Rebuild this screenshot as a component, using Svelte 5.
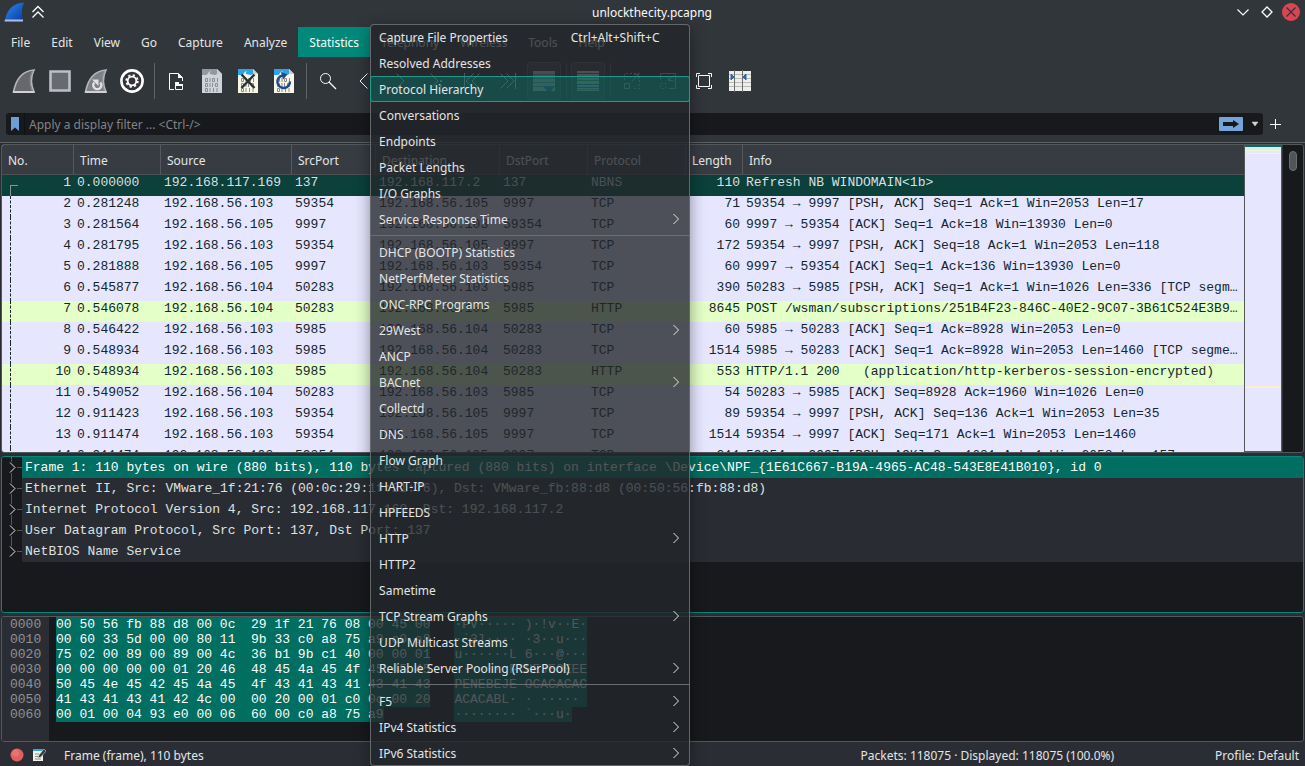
<script>
  const P = '192.168.56.';
  const packets = [
    [1, '0.000000', '192.168.117.169', '137', '192.168.117.2', '137', 'NBNS', 110, 'Refresh NB WINDOMAIN<1b>'],
    [2, '0.281248', P + '103', '59354', P + '105', '9997', 'TCP', 71, '59354 → 9997 [PSH, ACK] Seq=1 Ack=1 Win=2053 Len=17'],
    [3, '0.281564', P + '105', '9997', P + '103', '59354', 'TCP', 60, '9997 → 59354 [ACK] Seq=1 Ack=18 Win=13930 Len=0'],
    [4, '0.281795', P + '103', '59354', P + '105', '9997', 'TCP', 172, '59354 → 9997 [PSH, ACK] Seq=18 Ack=1 Win=2053 Len=118'],
    [5, '0.281888', P + '105', '9997', P + '103', '59354', 'TCP', 60, '9997 → 59354 [ACK] Seq=1 Ack=136 Win=13930 Len=0'],
    [6, '0.545877', P + '104', '50283', P + '103', '5985', 'TCP', 390, '50283 → 5985 [PSH, ACK] Seq=1 Ack=1 Win=1026 Len=336 [TCP segm…'],
    [7, '0.546078', P + '104', '50283', P + '103', '5985', 'HTTP', 8645, 'POST /wsman/subscriptions/251B4F23-846C-40E2-9C07-3B61C524E3B9…'],
    [8, '0.546422', P + '103', '5985', P + '104', '50283', 'TCP', 60, '5985 → 50283 [ACK] Seq=1 Ack=8928 Win=2053 Len=0'],
    [9, '0.548934', P + '103', '5985', P + '104', '50283', 'TCP', 1514, '5985 → 50283 [ACK] Seq=1 Ack=8928 Win=2053 Len=1460 [TCP segme…'],
    [10, '0.548934', P + '103', '5985', P + '104', '50283', 'HTTP', 553, 'HTTP/1.1 200   (application/http-kerberos-session-encrypted)'],
    [11, '0.549052', P + '104', '50283', P + '103', '5985', 'TCP', 54, '50283 → 5985 [ACK] Seq=8928 Ack=1960 Win=1026 Len=0'],
    [12, '0.911423', P + '103', '59354', P + '105', '9997', 'TCP', 89, '59354 → 9997 [PSH, ACK] Seq=136 Ack=1 Win=2053 Len=35'],
    [13, '0.911474', P + '103', '59354', P + '105', '9997', 'TCP', 1514, '59354 → 9997 [ACK] Seq=171 Ack=1 Win=2053 Len=1460'],
    [14, '0.911474', P + '103', '59354', P + '105', '9997', 'TCP', 211, '59354 → 9997 [PSH, ACK] Seq=1631 Ack=1 Win=2053 Len=157']
  ];
  const columns = ['No.', 'Time', 'Source', 'SrcPort', 'Destination', 'DstPort', 'Protocol', 'Length', 'Info'];

  const details = [
    'Frame 1: 110 bytes on wire (880 bits), 110 bytes captured (880 bits) on interface \\Device\\NPF_{1E61C667-B19A-4965-AC48-543E8E41B010}, id 0',
    'Ethernet II, Src: VMware_1f:21:76 (00:0c:29:1f:21:76), Dst: VMware_fb:88:d8 (00:50:56:fb:88:d8)',
    'Internet Protocol Version 4, Src: 192.168.117.169, Dst: 192.168.117.2',
    'User Datagram Protocol, Src Port: 137, Dst Port: 137',
    'NetBIOS Name Service'
  ];

  const hex = [
    ['0000', '00 50 56 fb 88 d8 00 0c  29 1f 21 76 08 00 45 00', '·PV····· )·!v··E·'],
    ['0010', '00 60 33 5d 00 00 80 11  9b 33 c0 a8 75 a9 c0 a8', '·`3]···· ·3··u···'],
    ['0020', '75 02 00 89 00 89 00 4c  36 b1 9b c1 40 00 00 01', 'u······L 6···@···'],
    ['0030', '00 00 00 00 00 01 20 46  48 45 4a 45 4f 45 45 45', '······ F HEJEOEEE'],
    ['0040', '50 45 4e 45 42 45 4a 45  4f 43 41 43 41 43 41 43', 'PENEBEJE OCACACAC'],
    ['0050', '41 43 41 43 41 42 4c 00  00 20 00 01 c0 0c 00 20', 'ACACABL· · ····· '],
    ['0060', '00 01 00 04 93 e0 00 06  60 00 c0 a8 75 a9', '········ `···u·']
  ];

  const menusLeft = ['File', 'Edit', 'View', 'Go', 'Capture', 'Analyze'];
  const menusRight = ['Telephony', 'Wireless', 'Tools', 'Help'];

  // A null entry is a separator; a trailing ">" opens a submenu.
  const statistics = [
    'Capture File Properties', 'Resolved Addresses', 'Protocol Hierarchy', 'Conversations', 'Endpoints',
    'Packet Lengths', 'I/O Graphs', 'Service Response Time>', null,
    'DHCP (BOOTP) Statistics', 'NetPerfMeter Statistics', 'ONC-RPC Programs', '29West>', 'ANCP', 'BACnet>',
    'Collectd', 'DNS', 'Flow Graph', 'HART-IP', 'HPFEEDS', 'HTTP>', 'HTTP2', 'Sametime', 'TCP Stream Graphs>',
    'UDP Multicast Streams', 'Reliable Server Pooling (RSerPool)>', null,
    'F5>', 'IPv4 Statistics>', 'IPv6 Statistics>'
  ];

  const tools = [
    ['fin', 'Start capture'], ['stop', 'Stop capture'], ['restart', 'Restart capture'], ['options', 'Capture options'], null,
    ['open', 'Open'], ['save', 'Save'], ['close', 'Close file'], ['reload', 'Reload'], null,
    ['find', 'Find packet'], ['back', 'Previous'], ['forward', 'Next'], ['goto', 'Go to packet'], ['first', 'First packet'],
    ['last', 'Last packet'], ['autoscroll', 'Auto scroll'], null, ['colorize', 'Colorize'], null,
    ['zoomin', 'Enlarge text'], ['zoomout', 'Shrink text'], ['normal', 'Normal size'], ['resize', 'Resize columns']
  ];
</script>

{#snippet sheet(top, paper, ink)}
  <path d="M6 4h15l5 5v19H6z" fill={paper} />
  <path d="M6 4h15v5c-2 2-5 0-7 0c-1-1 1-3 1-3c-3 0-3 4-5 4H6z" fill={top} />
  <path d="M21 4l5 5h-5z" fill="#c9ccd0" />
  <g fill="none" stroke={ink} stroke-width="1">
    <path d="M9.500 13.500h2v3h-2zM16.500 13.500h2v3h-2zM9.500 18.500h2v3h-2zM19.500 18.500h2v3h-2zM9.500 23.500h2v3h-2z" />
    <path d="M14 13v4M21.500 13v4M14 18v4M16.500 18v4M14 23v4M17.500 23v4M21 23v4" />
  </g>
{/snippet}

{#snippet icon(name)}
  <svg width="32" height="32" viewBox="0 0 32 32" aria-hidden="true">
    {#if name === 'fin' || name === 'restart'}
      <path d="M5.500 27C8 14 14 6 26 5C22.500 12 22.500 19 26 27z" fill={name === 'fin' ? '#66686e' : '#7d8086'} stroke="#b4b6ba" stroke-width="1.600" />
      <path d="M5 27h21.500" stroke="#cfd1d4" stroke-width="2" />
      <path d="M24 7C21.500 12 21.500 19 24 25.500" fill="none" stroke="#909298" stroke-width="1" />
      {#if name === 'restart'}
        <path d="M14.300 17.500a4 4 0 1 0 6 0" fill="none" stroke="#e0e2e4" stroke-width="2.400" />
        <path d="M12 14.500h6.500v6.500z" fill="#e0e2e4" />
      {/if}
    {:else if name === 'stop'}
      <path d="M6.500 6.500h19v19h-19z" fill="#686a72" stroke="#bdbfc5" stroke-width="2.600" />
    {:else if name === 'options'}
      <circle cx="16" cy="16" r="10.600" fill="#333539" stroke="#fff" stroke-width="2.600" />
      <circle cx="16" cy="16" r="5.800" fill="none" stroke="#fff" stroke-width="1.800" stroke-dasharray="2.200 2.355" />
      <circle cx="16" cy="16" r="4.300" fill="none" stroke="#fff" stroke-width="1.800" />
    {:else if name === 'open'}
      <path d="M14 24.500H9.500V8.500h9l4 4V16" fill="none" stroke="#fcfcfc" />
      <path d="M18 8v5h5z" fill="#fcfcfc" />
      <path d="M15.500 24.500v-7h3v2h4v5z" fill="none" stroke="#fcfcfc" />
      <path d="M15 17h4v2h4v2h-8z" fill="#fcfcfc" />
    {:else if name === 'save'}
      {@render sheet('#9496a0', '#cfd2d8', '#8a8d94')}
    {:else if name === 'close'}
      {@render sheet('#2fa4e4', '#f8f6e6', '#8a8b84')}
      <path d="M9.500 9.500l13 13.500M22.500 9.500l-13 13.500" stroke="#2a3034" stroke-width="2.400" />
    {:else if name === 'reload'}
      {@render sheet('#2fa4e4', '#f8f6e6', '#8a8b84')}
      <path d="M14.500 10.500a6.300 6.300 0 1 0 7.500 6" fill="none" stroke="#204a8c" stroke-width="2.400" />
      <path d="M13 7l6.500 2.500-4.500 5z" fill="#204a8c" />
    {:else if name === 'find'}
      <circle cx="13.500" cy="13.500" r="5" fill="none" stroke="#fcfcfc" />
      <path d="M17 17l7 7" stroke="#fcfcfc" stroke-width="1.300" />
    {:else if name === 'back'}
      <path d="M19.500 8.500l-7.500 7.500 7.500 7.500" fill="none" stroke="#fcfcfc" />
    {:else if name === 'forward'}
      <path d="M12.500 8.500l7.500 7.500-7.500 7.500" fill="none" stroke="#fcfcfc" />
    {:else if name === 'goto'}
      <path d="M10.500 8.500l7.500 7.500-7.500 7.500" fill="none" stroke="#fcfcfc" /><path d="M20 15h2v2h-2zM20 20h2v2h-2z" fill="#fcfcfc" />
    {:else if name === 'first'}
      <path d="M8.500 8v16M17.500 8.500L10 16l7.500 7.500M23.500 8.500L16 16l7.500 7.500" fill="none" stroke="#fcfcfc" />
    {:else if name === 'last'}
      <path d="M23.500 8v16M8.500 8.500L16 16l-7.500 7.500M14.500 8.500L22 16l-7.500 7.500" fill="none" stroke="#fcfcfc" />
    {:else if name === 'autoscroll'}
      <path d="M5 6h22v20H5z" fill="#d8dad4" /><path d="M5 9.500h22M5 13.500h22M5 17.500h22M5 21.500h22" stroke="#8d9090" /><path d="M15 21h12l-4 5h-4z" fill="#3465a4" />
    {:else if name === 'colorize'}
      <path d="M5 6h22v20H5z" fill="#e4e6e2" /><path d="M5 8.500h22" stroke="#c33" /><path d="M5 12h22" stroke="#3465a4" /><path d="M5 15.500h22" stroke="#4e9a30" /><path d="M5 19.500h22" stroke="#3465a4" /><path d="M5 22.500h22" stroke="#75507b" /><path d="M5 24.500h22" stroke="#c4a000" />
    {:else if name === 'zoomin'}
      <path d="M8.500 18.500h5v5h-5zM18 9.500h4.500V14M22 10l-6 6" fill="none" stroke="#fcfcfc" /><path d="M8.500 15V8.500h15v15H16" fill="none" stroke="#fcfcfc" stroke-dasharray="2 2" />
    {:else if name === 'zoomout'}
      <path d="M8.500 15V8.500h15v15H17M16.500 11v4.500H21M17 15l5-5" fill="none" stroke="#fcfcfc" /><path d="M8.500 18.500h5v5h-5z" fill="none" stroke="#fcfcfc" stroke-dasharray="2 2" />
    {:else if name === 'normal'}
      <path d="M10.500 10.500h11v11h-11zM8.500 12V8.500H12M20 8.500h3.500V12M23.500 20v3.500H20M12 23.500H8.500V20" fill="none" stroke="#fcfcfc" />
    {:else if name === 'resize'}
      <path d="M5 6h22v20H5z" fill="#eeeeec" /><path d="M5 9.500h22M5 13.500h22M5 17.500h22M5 21.500h22" stroke="#b9bbb6" /><path d="M10.500 5v22M18.500 5v22" stroke="#6b6e6b" /><path d="M7 9v6l3-3zM22 9v6l-3-3z" fill="#3465a4" stroke="#3465a4" />
    {/if}
  </svg>
{/snippet}

<div class="window">
  <header class="title">
    <div class="side">
      <svg width="22" height="22" viewBox="0 0 22 22" aria-hidden="true">
        <defs><linearGradient id="fin" x1="0" y1="0" x2="1" y2="1"><stop offset="0" stop-color="#2f8cf0" /><stop offset="1" stop-color="#0838a0" /></linearGradient></defs>
        <path d="M1 20C2.500 9 9 2 20 1.500C17.500 7 17.500 14 19 20z" fill="url(#fin)" />
        <path d="M1 18.500h18v2H0.500z" fill="#aebfe6" />
      </svg>
      <button class="plain" aria-label="Keep above">
        <svg width="14" height="14" viewBox="0 0 14 14"><path d="M1.500 7L7 1.500 12.500 7M1.500 12.500L7 7l5.500 5.500" fill="none" stroke="#fcfcfc" stroke-width="1.300" /></svg>
      </button>
    </div>
    <h1>unlockthecity.pcapng</h1>
    <div class="side end">
      <button class="plain" aria-label="Minimize"><svg width="12" height="12" viewBox="0 0 12 12"><path d="M.5 3.500L6 9l5.500-5.500" fill="none" stroke="#fcfcfc" stroke-width="1.200" /></svg></button>
      <button class="plain" aria-label="Maximize"><svg width="12" height="12" viewBox="0 0 12 12"><path d="M6 1l5 5-5 5-5-5z" fill="none" stroke="#fcfcfc" stroke-width="1.300" /></svg></button>
      <button class="plain" aria-label="Close"><svg width="18" height="18" viewBox="0 0 18 18"><circle cx="9" cy="9" r="9" fill="#da4453" /><path d="M4.500 4.500l9 9M13.500 4.500l-9 9" stroke="#31363b" stroke-width="1.300" /></svg></button>
    </div>
  </header>

  <nav class="menubar">
    {#each menusLeft as m}<button>{m}</button>{/each}
    <div class="anchor">
      <button class="open">Statistics</button>
      <div class="menu" role="menu">
        {#each statistics as s, i}
          {#if s === null}
            <hr />
          {:else}
            <button role="menuitem" class:hot={i === 2}>
              <span>{s.replace('>', '')}</span>
              {#if i === 0}<span class="key">Ctrl+Alt+Shift+C</span>{/if}
              {#if s.endsWith('>')}
                <svg width="8" height="12" viewBox="0 0 8 12" aria-hidden="true"><path d="M1.500 1l5 5-5 5" fill="none" stroke="#e4e5e6" /></svg>
              {/if}
            </button>
          {/if}
        {/each}
      </div>
    </div>
    {#each menusRight as m}<button>{m}</button>{/each}
  </nav>

  <div class="toolbar">
    {#each tools as t}
      {#if t === null}
        <i></i>
      {:else}
        <button aria-label={t[1]} class:on={t[0] === 'autoscroll' || t[0] === 'colorize'} class:dim={t[0] === 'zoomin' || t[0] === 'zoomout'}>{@render icon(t[0])}</button>
      {/if}
    {/each}
  </div>

  <div class="filter">
    <div class="field">
      <button class="plain mark" aria-label="Bookmarks"><svg width="8" height="14" viewBox="0 0 8 14"><path d="M0 0h8v14l-4-3.500L0 14z" fill="#6f9dd6" /></svg></button>
      <input type="text" aria-label="Display filter" placeholder="Apply a display filter ... &lt;Ctrl-/&gt;" />
      <button class="plain" aria-label="Apply"><svg width="24" height="14" viewBox="0 0 24 14"><rect width="24" height="14" rx="1" fill="#76a3d9" /><path d="M4 5h10V3l6 4-6 4V9H4z" fill="#18191c" /></svg></button>
      <button class="plain" aria-label="Recent filters"><svg width="20" height="14" viewBox="0 0 20 14"><path d="M9 5h6l-3 4z" fill="#d5d6cf" stroke="#d5d6cf" stroke-width=".5" /></svg></button>
    </div>
    <button class="plain" aria-label="Add filter button"><svg width="24" height="12" viewBox="0 0 24 12"><path d="M12.500 1v10M7 6.500h11" stroke="#fcfcfc" /></svg></button>
  </div>

  <main>
    <section class="pane packets">
      <div class="list">
        <table>
          <colgroup>
            <col class="no" /><col class="time" /><col class="src" /><col class="sport" /><col class="dst" /><col class="dport" /><col class="proto" /><col class="len" /><col />
          </colgroup>
          <thead><tr>{#each columns as c}<th>{c}</th>{/each}</tr></thead>
          <tbody>
            {#each packets as row}
              <tr class:sel={row[0] === 1} class:http={row[6] === 'HTTP'}>
                {#each row as cell, i}
                  <td class:num={i === 0 || i === 7}>{#if i === 0}<span class="trace" class:start={row[0] === 1}></span>{/if}{cell}</td>
                {/each}
              </tr>
            {/each}
          </tbody>
        </table>
      </div>
      <div class="minimap"></div>
      <div class="scroll"><span></span></div>
    </section>

    <section class="pane details">
      <ul>
        {#each details as d, i}
          <li class:sel={i === 0}>
            <span class="twig"><svg width="20" height="21" viewBox="0 0 20 21" aria-hidden="true"><path d={i === 4 ? 'M9.500 0v5M15 10.500h5' : 'M9.500 0v5M9.500 16v5M15 10.500h5'} stroke="#54575b" /><path d="M8 5.500l5 5-5 5" fill="none" stroke="#e4e5e6" /></svg></span>
            <span class="line">{d}</span>
          </li>
        {/each}
      </ul>
    </section>

    <section class="pane bytes">
      <div class="offsets">{#each hex as h}<span>{h[0]}</span>{/each}</div>
      <div class="data">
        {#each hex as h}<span>{h[1]}</span>{/each}
      </div>
      <div class="data ascii">
        {#each hex as h}<span>{h[2]}</span>{/each}
      </div>
    </section>
  </main>

  <footer>
    <button class="plain" aria-label="Expert information"><svg width="14" height="14" viewBox="0 0 14 14"><circle cx="7" cy="7" r="6.500" fill="#e0605f" /><circle cx="5.500" cy="5" r="3.500" fill="#ee8180" opacity=".6" /></svg></button>
    <button class="plain" aria-label="Capture comments"><svg width="14" height="14" viewBox="0 0 14 14"><path d="M1 1h10v12H1z" fill="#f2f2ea" /><path d="M1 1h10v2H1z" fill="#35a3dc" /><path d="M3 6h4M3 8.500h3M3 11h6" stroke="#8c8e88" /><path d="M6 10l1-3 5-6 2 2-5 6z" fill="#33383c" stroke="#cfd0ca" stroke-width=".6" /></svg></button>
    <span class="frame">Frame (frame), 110 bytes</span>
    <span class="count">Packets: 118075 · Displayed: 118075 (100.0%)</span>
    <span>Profile: Default</span>
  </footer>
</div>

<style>
  :global(body) { margin: 0; background: #2a2e32; }
  * { box-sizing: border-box; }
  button, input { font: inherit; color: inherit; border: 0; background: none; padding: 0; margin: 0; }
  svg { display: block; }
  .window {
    height: 100vh; overflow: hidden; display: flex; flex-direction: column;
    font: 12px/18px "Noto Sans", sans-serif; color: #fcfcfc; background: #2a2e34;
  }
  .plain { display: flex; align-items: center; justify-content: center; }

  .title { flex: none; height: 27px; padding: 0 5px 3px 4px; display: flex; align-items: center; background: #31363b; }
  .side { flex: 1; display: flex; align-items: center; gap: 5px; }
  .end { justify-content: flex-end; gap: 12px; }
  .end button:last-child { margin-left: -3px; }
  h1 { margin: 0; padding-top: 2px; font-size: 12px; font-weight: 400; }

  .menubar { flex: none; height: 30px; padding-left: 1px; display: flex; gap: 1px; background: #31363b; color: #e4e5e6; }
  .menubar > button { height: 30px; padding: 2px 10px 0; }
  .anchor { position: relative; }
  .open { height: 30px; padding: 2px 11px 0; background: #00897b; color: #fcfcfc; }
  .menu {
    position: absolute; z-index: 5; left: 100%; top: -3px; width: 320px;
    display: flex; flex-direction: column;
    background: rgba(35, 38, 42, .785); border-radius: 4px;
    box-shadow: inset 0 0 0 1px #65686b, 0 4px 16px rgba(0, 0, 0, .4);
  }
  .menu button { height: 26px; padding: 0 10px 0 9px; display: flex; align-items: center; text-align: left; }
  .menu span { padding-top: 2px; }
  .menu svg { margin-left: auto; }
  .menu .hot { background: rgba(0, 137, 123, .35); border-radius: 3px; box-shadow: inset 0 0 0 1px #1b9b8d; }
  .menu .key { margin-left: 63px; }
  .menu hr { width: 100%; height: 1px; margin: 3px 0; border: 0; background: #6b6e72; }

  .toolbar { flex: none; height: 48px; padding: 0 8px; display: flex; align-items: center; gap: 4px; background: #31363b; }
  .toolbar button { width: 32px; height: 36px; display: flex; align-items: center; justify-content: center; border-radius: 3px; }
  .toolbar button svg { flex: none; }
  .toolbar .on { box-shadow: 0 0 0 1px #5d6165; background: #3c4146; }
  .toolbar .dim { opacity: .65; }
  .toolbar i { width: 4px; height: 36px; display: flex; }
  .toolbar i::before { content: ""; width: 1px; margin-left: 2px; background: #5f6367; }

  .filter { flex: none; height: 38px; padding: 8px 18px 7px 6px; display: flex; align-items: center; background: #31363b; border-bottom: 1px solid #5f6265; }
  .field { flex: 1; height: 22px; display: flex; align-items: center; background: #18191c; border-radius: 3px; }
  .mark { width: 19px; height: 22px; border-right: 1px solid #101113; }
  .filter input { flex: 1; min-width: 0; height: 22px; padding: 0 4px; outline: none; }
  .filter input::placeholder { color: #818386; opacity: 1; }

  main { flex: 1; min-height: 0; padding: 1px 1px 0; display: flex; flex-direction: column; gap: 3px; font: 13px/15px "Liberation Mono", monospace; }
  .pane { min-height: 0; border: 1px solid #55585b; border-radius: 3px; background: #18191c; overflow: hidden; display: flex; flex-basis: 0; }
  .packets { flex-grow: 309; }
  .details { flex-grow: 155; border-color: #00897b; }
  .bytes { flex-grow: 125; }

  .list { flex: 1; min-width: 0; overflow: hidden; background: #e6e6ff; }
  table { width: 100%; table-layout: fixed; border-collapse: separate; border-spacing: 0; }
  .no { width: 72px; } .time { width: 87px; } .src { width: 131px; } .sport { width: 84px; }
  .dst { width: 124px; } .dport { width: 88px; } .proto { width: 98px; } .len { width: 57px; }
  th { height: 30px; padding: 2px 0 0 6px; text-align: left; font: 12px/18px "Noto Sans", sans-serif; color: #e4e5e6; background: #373c43; border-bottom: 1px solid #4c5055; border-right: 1px solid #55595e; }
  th:last-child { border-right: 0; }
  td { height: 21px; padding: 0 0 0 3px; vertical-align: top; white-space: pre; color: #12272e; overflow: hidden; position: relative; }
  .num { text-align: right; padding-right: 3px; }
  .http td { background: #e4ffc7; }
  .sel td { background: #0b403b; color: #dcdfe0; }
  .trace { position: absolute; left: 8px; top: 0; height: 21px; border-left: 1px dashed #12272e; }
  .trace.start { top: 10px; height: 11px; width: 8px; border-left: 1px solid #8b9493; border-top: 1px solid #8b9493; }
  .minimap {
    width: 38px; flex: none; border: 1px solid #55585b; border-top: 0; background-color: #e6e6ff;
    background-image: linear-gradient(#00705f 2px, transparent 2px 5px, #e4ffc7 5px 6px, transparent 6px 8px, #e4ffc7 8px 9px, transparent 9px 241px, #fcefd0 241px 243px, transparent 243px);
  }
  .scroll { width: 21px; flex: none; padding: 6px 0 0 6px; border-left: 1px solid #2c2f33; }
  .scroll span { display: block; width: 8px; height: 20px; border-radius: 4px; background: #4f5559; border: 1px solid #6b6f72; }

  ul { flex: 1; min-width: 0; margin: 0; padding: 0; list-style: none; color: #dfe0e1; }
  li { display: flex; height: 21px; }
  .twig { width: 20px; flex: none; }
  .line { flex: 1; padding: 3px; background: #292d33; white-space: pre; overflow: hidden; }
  li.sel .line { background: #006e60; color: #fcfcfc; }

  .offsets { width: 47px; padding-left: 8px; background: #2a2e34; color: #8f9194; display: flex; flex-direction: column; }
  .data { margin-left: 7px; display: flex; flex-direction: column; align-items: flex-start; }
  .data span { background: #006e60; white-space: pre; }
  .ascii { margin-left: 24px; }

  footer { flex: none; height: 24px; padding: 2px 6px 0 10px; display: flex; align-items: center; color: #e4e5e6; }
  footer button { margin-right: 8px; }
  footer span { padding-top: 2px; }
  .frame { margin-left: 10px; flex: 1; }
  .count { margin-right: 101px; }
</style>
